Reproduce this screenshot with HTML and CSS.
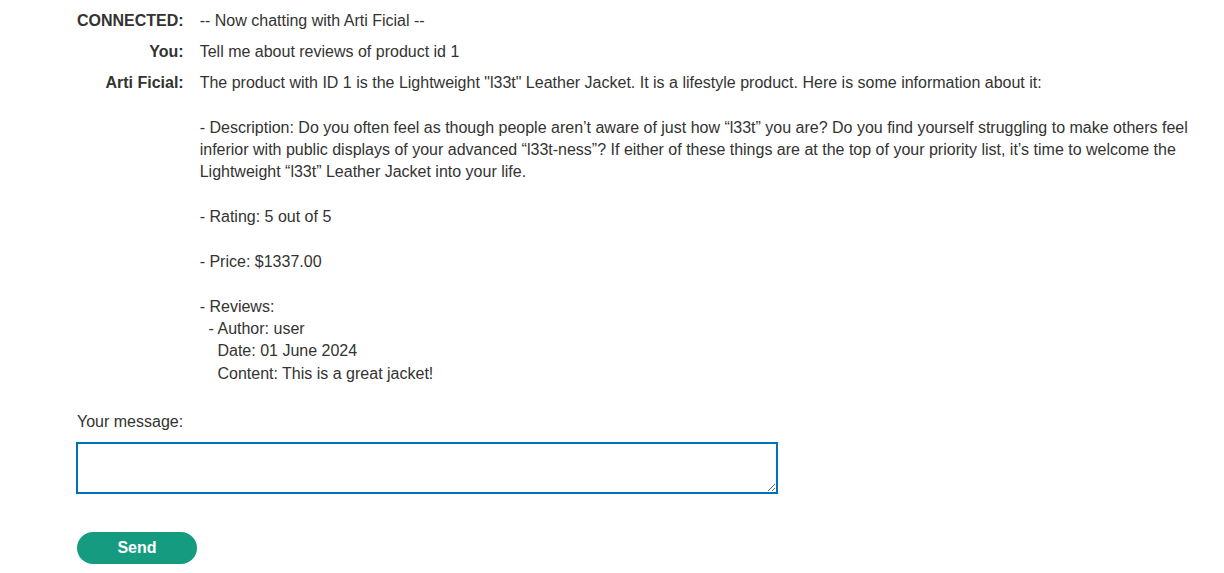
FILE: index.html
```html
<!DOCTYPE html>
<html>
<head>
<meta charset="utf-8">
<link rel="stylesheet" href="styles.css">
</head>
<body>
<div class="page">
  <table class="chat">
    <tr><th>CONNECTED:</th><td>-- Now chatting with Arti Ficial --</td></tr>
    <tr><th>You:</th><td>Tell me about reviews of product id 1</td></tr>
    <tr><th>Arti Ficial:</th><td class="msg">The product with ID 1 is the Lightweight "l33t" Leather Jacket. It is a lifestyle product. Here is some information about it:

- Description: Do you often feel as though people aren’t aware of just how “l33t” you are? Do you find yourself struggling to make others feel inferior with public displays of your advanced “l33t-ness”? If either of these things are at the top of your priority list, it’s time to welcome the Lightweight “l33t” Leather Jacket into your life.

- Rating: 5 out of 5

- Price: $1337.00

- Reviews:
  - Author: user
    Date: 01 June 2024
    Content: This is a great jacket!</td></tr>
  </table>
  <form class="form">
    <label class="label" for="msg">Your message:</label>
    <textarea id="msg" class="input" autofocus></textarea>
    <button type="button" class="send">Send</button>
  </form>
</div>
</body>
</html>
```
FILE: styles.css
```css
html, body {
  margin: 0;
  padding: 0;
  background: #fff;
}
body {
  font-family: "Liberation Sans", Arial, sans-serif;
  font-size: 16px;
  line-height: 1.4;
  color: #333332;
}
.page {
  padding: 6px 30px 0 77px;
}
.chat {
  border-collapse: collapse;
  width: 100%;
}
.chat th {
  text-align: right;
  font-weight: bold;
  vertical-align: top;
  white-space: nowrap;
  padding: 4px 16px 4px 0;
  width: 1px;
}
.chat td {
  padding: 4px 0;
  vertical-align: top;
}
.chat tr + tr td,
.chat tr + tr th {
  padding-top: 4.5px;
}
.msg {
  white-space: pre-wrap;
}
.form {
  display: flex;
  flex-direction: column;
  align-items: flex-start;
  margin-top: 22px;
}
.label {
  display: block;
  margin-bottom: 8px;
}
.input {
  box-sizing: border-box;
  width: 702px;
  height: 52px;
  margin-left: -1px;
  border: 2px solid #0071bc;
  outline: none;
  padding: 6px 6px;
  font-family: "Liberation Sans", Arial, sans-serif;
  font-size: 16px;
  color: #333332;
  border-radius: 0;
}
.send {
  margin-top: 38px;
  width: 120px;
  height: 32px;
  border: none;
  border-radius: 16px;
  background: #159c80;
  color: #fff;
  font-family: "Liberation Sans", Arial, sans-serif;
  font-weight: bold;
  font-size: 16px;
  padding: 0;
}
```
